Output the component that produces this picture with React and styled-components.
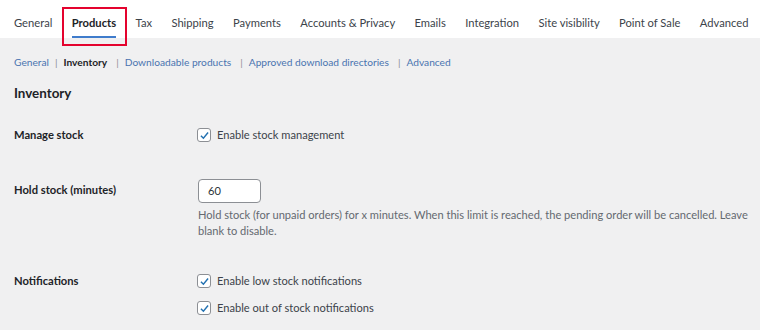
import React from 'react';
import styled, { createGlobalStyle } from 'styled-components';

const GlobalStyle = createGlobalStyle`
  body {
    margin: 0;
    background: #f0f0f1;
    font-family: Lato, "Open Sans", sans-serif;
    color: #1d2327;
  }
`;

const Page = styled.div`
  width: 760px;
  height: 330px;
  overflow: hidden;
`;

const TabBar = styled.nav`
  height: 38px;
  background: #fff;
  display: flex;
  align-items: stretch;
  gap: 19.4px;
  padding-left: 14px;
`;

const Tab = styled.a`
  position: relative;
  display: flex;
  align-items: center;
  font-size: 11.2px;
  white-space: nowrap;
  color: ${props => (props.$active ? '#1d2327' : '#3c434a')};
  font-weight: ${props => (props.$active ? 700 : 400)};
  box-shadow: ${props => (props.$active ? 'inset 0 -2px 0 #3f7ccc' : 'none')};
  padding-top: 6px;
  box-sizing: border-box;
`;

const Highlight = styled.span`
  position: absolute;
  left: -10px;
  right: -11px;
  top: 7px;
  bottom: -8px;
  border: 2px solid #e4032e;
  pointer-events: none;
`;

const SubNav = styled.ul`
  list-style: none;
  margin: 16px 0 0;
  padding: 0 14px;
  display: flex;
  font-size: 10.2px;
  line-height: 16px;
`;

const SubItem = styled.li`
  display: flex;
  white-space: nowrap;

  &:not(:first-child)::before {
    content: '|';
    color: #8c8f94;
    margin: 0 6px 0 ${props => (props.$wide ? 9 : 6)}px;
  }
`;

const SubLink = styled.a`
  color: ${props => (props.$current ? '#1d2327' : '#4a74b0')};
  font-weight: ${props => (props.$current ? 700 : 400)};
`;

const Heading = styled.h2`
  margin: 13px 14px 6px;
  font-size: 13.4px;
  line-height: 20px;
  font-weight: 700;
`;

const Row = styled.div`
  display: grid;
  grid-template-columns: 184px 1fr;
  padding: 16px 4px 16px 14px;
`;

const Label = styled.div`
  font-size: 11.2px;
  font-weight: 700;
  line-height: ${props => props.$lh || 20}px;
  padding-top: ${props => props.$pt || 0}px;
`;

const Field = styled.div`
  display: flex;
  flex-direction: column;
  gap: 7px;
`;

const CheckLine = styled.label`
  display: flex;
  align-items: center;
  gap: 6px;
  font-size: 11.1px;
  line-height: 20px;
  color: #3c434a;
`;

const Box = styled.span`
  width: 12px;
  height: 12px;
  margin-left: -1px;
  border: 1px solid #8c8f94;
  border-radius: 3px;
  background: #fff;
  display: flex;
  align-items: center;
  justify-content: center;
`;

const NumberInput = styled.div`
  margin-top: 2px;
  width: 63px;
  height: 24px;
  box-sizing: border-box;
  border: 1px solid #8c8f94;
  border-radius: 4px;
  background: #fff;
  font-size: 11.1px;
  line-height: 22px;
  padding-left: 9px;
  color: #2c3338;
`;

const Description = styled.p`
  margin: 0;
  margin-top: -3px;
  font-size: 11.1px;
  line-height: 16px;
  color: #646970;
`;

const Check = () => (
  <Box>
    <svg width="11" height="11" viewBox="0 0 20 20">
      <path d="M3.5 10.5 L8 15 L16.5 4.5" fill="none" stroke="#2271b1" strokeWidth="2.6" />
    </svg>
  </Box>
);

const tabs = ['General', 'Products', 'Tax', 'Shipping', 'Payments', 'Accounts & Privacy', 'Emails', 'Integration', 'Site visibility', 'Point of Sale', 'Advanced'];
const sections = ['General', 'Inventory', 'Downloadable products', 'Approved download directories', 'Advanced'];

export default function App() {
  return (
    <Page>
      <GlobalStyle />
      <TabBar>
        {tabs.map(t => (
          <Tab key={t} $active={t === 'Products'}>
            {t}
            {t === 'Products' && <Highlight />}
          </Tab>
        ))}
      </TabBar>
      <SubNav>
        {sections.map((s, i) => (
          <SubItem key={s} $wide={i > 1}>
            <SubLink $current={s === 'Inventory'}>{s}</SubLink>
          </SubItem>
        ))}
      </SubNav>
      <Heading>Inventory</Heading>
      <Row>
        <Label>Manage stock</Label>
        <Field>
          <CheckLine><Check />Enable stock management</CheckLine>
        </Field>
      </Row>
      <Row>
        <Label $lh={22} $pt={2}>Hold stock (minutes)</Label>
        <Field>
          <NumberInput>60</NumberInput>
          <Description>
            Hold stock (for unpaid orders) for x minutes. When this limit is reached, the pending order will be cancelled. Leave blank to disable.
          </Description>
        </Field>
      </Row>
      <Row>
        <Label>Notifications</Label>
        <Field>
          <CheckLine><Check />Enable low stock notifications</CheckLine>
          <CheckLine><Check />Enable out of stock notifications</CheckLine>
        </Field>
      </Row>
    </Page>
  );
}
